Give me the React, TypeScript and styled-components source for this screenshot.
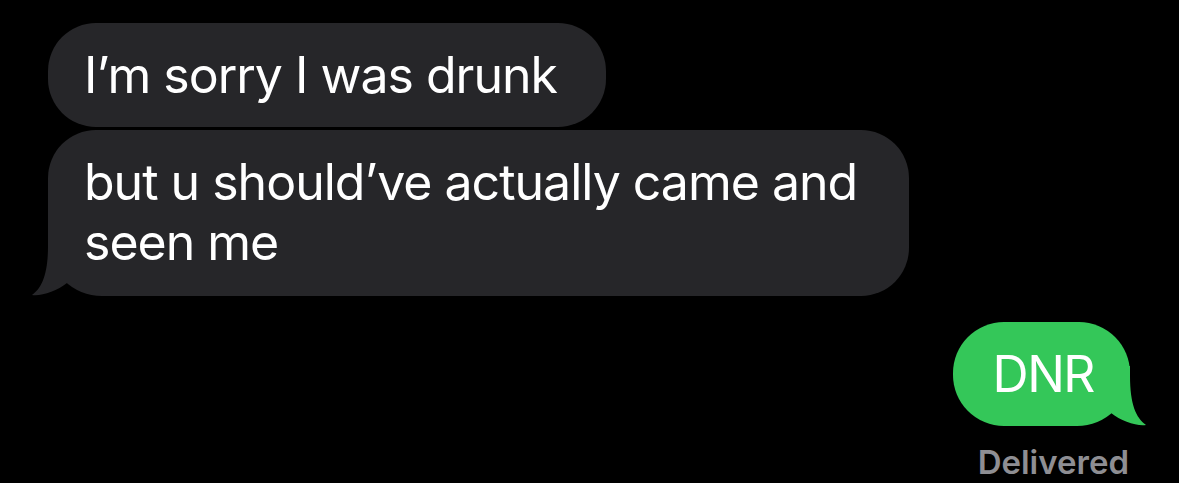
import React from 'react';
import styled, { createGlobalStyle } from 'styled-components';

const GlobalStyle = createGlobalStyle`
  html, body {
    margin: 0;
    padding: 0;
    background: #000;
  }
  body {
    font-family: Inter, "Noto Sans", "Liberation Sans", sans-serif;
    -webkit-font-smoothing: antialiased;
  }
`;

const Thread = styled.div`
  width: 1179px;
  height: 483px;
  box-sizing: border-box;
  padding: 23px 49px 0 48px;
  display: flex;
  flex-direction: column;
  overflow: hidden;
`;

const Group = styled.div<{ $sent?: boolean }>`
  display: flex;
  flex-direction: column;
  align-items: ${({ $sent }) => ($sent ? 'flex-end' : 'flex-start')};
  gap: 3px;
  margin-top: ${({ $sent }) => ($sent ? '26px' : '0')};
`;

const Bubble = styled.div<{ $sent?: boolean; $tail?: boolean }>`
  position: relative;
  box-sizing: border-box;
  max-width: 861px;
  padding: 22px ${({ $sent }) => ($sent ? '36px' : '49px')}
    ${({ $tail, $sent }) => ($tail && !$sent ? '24px' : '22px')}
    ${({ $sent }) => ($sent ? '40px' : '36px')};
  border-radius: ${({ $sent }) => ($sent ? '52px' : '48px')};
  ${({ $tail, $sent }) =>
    $tail && ($sent ? 'border-bottom-right-radius: 54px;' : 'border-bottom-left-radius: 54px;')}
  background: ${({ $sent }) => ($sent ? '#34c759' : '#262629')};
  color: #fff;
  font-size: 50px;
  line-height: 60px;
  letter-spacing: ${({ $sent }) => ($sent ? '-1.5px' : '-1px')};
  font-weight: 400;
`;

const TailSvg = styled.svg<{ $sent?: boolean }>`
  position: absolute;
  bottom: 0;
  width: 37px;
  height: 60px;
  ${({ $sent }) => ($sent ? 'right: -17px; transform: scaleX(-1);' : 'left: -17px;')}
`;

const Status = styled.div`
  margin-top: 14px;
  margin-right: 1px;
  color: #8e8e93;
  font-size: 33px;
  line-height: 38px;
  font-weight: 600;
`;

const Tail: React.FC<{ sent?: boolean; color: string }> = ({ sent, color }) => (
  <TailSvg $sent={sent} viewBox="0 0 37 60">
    <path
      d="M17 0 L17 10 C17 38 11 52 1 59 C10 60.5 26 55 36 47 L37 47 L37 0 Z"
      fill={color}
    />
  </TailSvg>
);

const Message: React.FC<{ sent?: boolean; tail?: boolean; children: React.ReactNode }> = ({
  sent,
  tail,
  children,
}) => (
  <Bubble $sent={sent} $tail={tail}>
    {tail && <Tail sent={sent} color={sent ? '#34c759' : '#262629'} />}
    {children}
  </Bubble>
);

export default function App() {
  return (
    <>
      <GlobalStyle />
      <Thread>
        <Group>
          <Message>I’m sorry I was drunk</Message>
          <Message tail>but u should’ve actually came and seen me</Message>
        </Group>
        <Group $sent>
          <Message sent tail>DNR</Message>
          <Status>Delivered</Status>
        </Group>
      </Thread>
    </>
  );
}
